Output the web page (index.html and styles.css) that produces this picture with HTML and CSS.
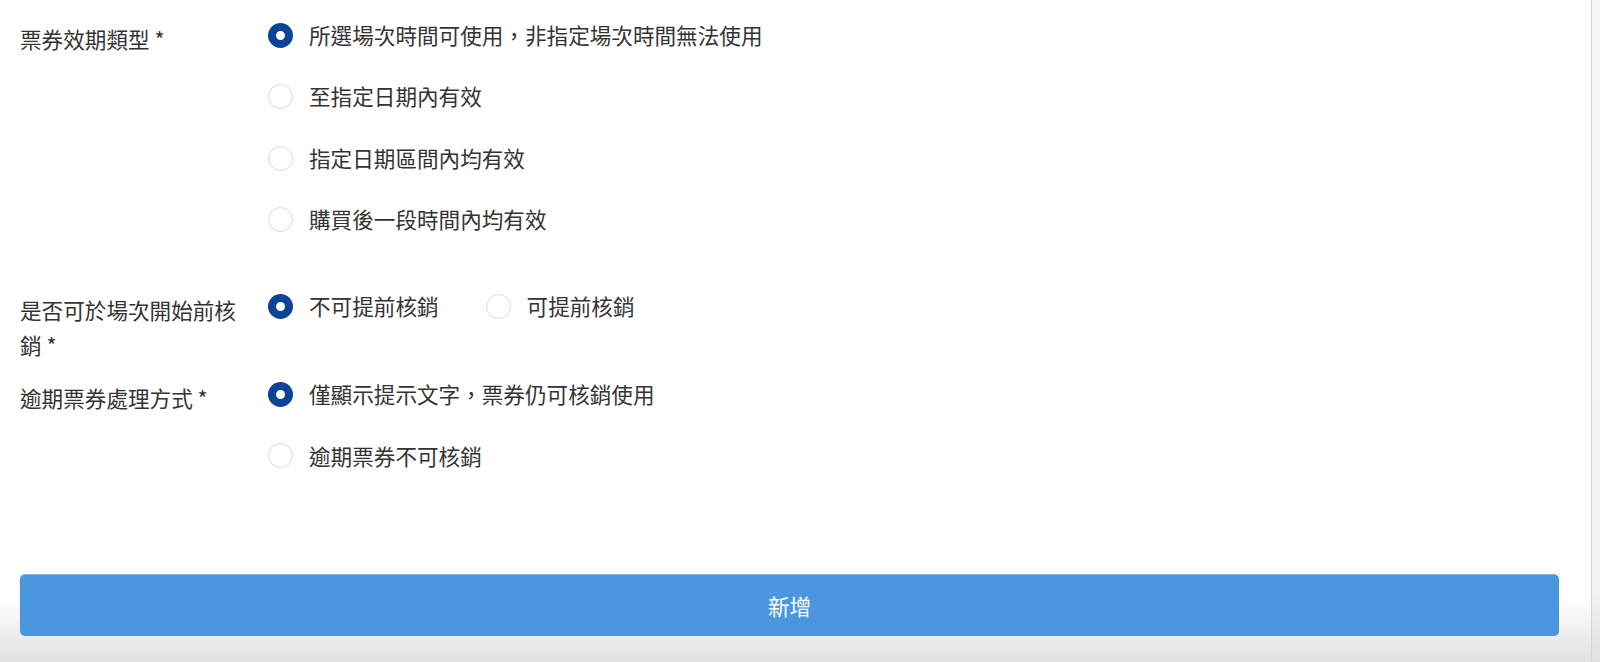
FILE: index.html
```html
<!DOCTYPE html>
<html lang="zh-Hant">
<head>
  <meta charset="UTF-8">
  <meta name="viewport" content="width=device-width, initial-scale=1.0">
  <title>票券設定</title>
  <link rel="stylesheet" href="styles.css">
</head>
<body>
  <div class="page">
    <form id="form">
      <div class="group">
        <div class="group-label">票券效期類型 *</div>
        <div class="options">
          <label class="option"><input type="radio" name="validity" value="session" checked><span>所選場次時間可使用，非指定場次時間無法使用</span></label>
          <label class="option"><input type="radio" name="validity" value="until"><span>至指定日期內有效</span></label>
          <label class="option"><input type="radio" name="validity" value="range"><span>指定日期區間內均有效</span></label>
          <label class="option"><input type="radio" name="validity" value="after"><span>購買後一段時間內均有效</span></label>
        </div>
      </div>

      <div class="group tight">
        <div class="group-label">是否可於場次開始前核銷 *</div>
        <div class="options inline">
          <label class="option"><input type="radio" name="early" value="no" checked><span>不可提前核銷</span></label>
          <label class="option"><input type="radio" name="early" value="yes"><span>可提前核銷</span></label>
        </div>
      </div>

      <div class="group">
        <div class="group-label">逾期票券處理方式 *</div>
        <div class="options">
          <label class="option"><input type="radio" name="expired" value="notice" checked><span>僅顯示提示文字，票券仍可核銷使用</span></label>
          <label class="option"><input type="radio" name="expired" value="block"><span>逾期票券不可核銷</span></label>
        </div>
      </div>

      <button type="submit">新增</button>
    </form>
  </div>
</body>
</html>
```

FILE: styles.css
```css
body {
  margin: 0;
  padding: 0;
  font-family: "Noto Sans CJK TC", "Noto Sans", sans-serif;
  font-size: 21.6px;
  line-height: 1.6;
  color: #333;
  background: linear-gradient(to bottom, #f7f7f7 0, #f3f3f3 590px, #e0e0e0 662px);
  min-height: 662px;
}

.page {
  box-sizing: border-box;
  width: 1592px;
  min-height: 662px;
  padding: 18px 32px 0 20px;
  border-right: 1px solid #d4d4d4;
  background: linear-gradient(to bottom, #fff 0, #fff 598px, #e1e1e1 662px);
}

.group {
  display: flex;
  margin-bottom: 25px;
}

.group.tight {
  margin-bottom: 15px;
}

.group-label {
  width: 248px;
  box-sizing: border-box;
  flex-shrink: 0;
  padding: 4px 14px 0 0;
}

.options {
  flex: 1;
}

.options.inline {
  display: flex;
  gap: 47px;
}

.option {
  display: flex;
  align-items: center;
  gap: 16px;
  height: 34.5px;
  margin-bottom: 27px;
  cursor: pointer;
}

input[type="radio"] {
  appearance: none;
  -webkit-appearance: none;
  box-sizing: border-box;
  width: 25px;
  height: 25px;
  margin: 0;
  border: 1px solid #d9d9d9;
  border-radius: 50%;
  background: #fff;
  flex-shrink: 0;
}

input[type="radio"]:checked {
  border: 8px solid #0b4396;
}

button {
  display: block;
  width: 100%;
  height: 62px;
  margin-top: 74px;
  padding: 0;
  font-family: inherit;
  font-size: 21.6px;
  color: #fff;
  background-color: #4a97df;
  border: 1px solid #4b92d8;
  border-top-color: #7fb4ea;
  border-radius: 5px;
  cursor: pointer;
}
```
